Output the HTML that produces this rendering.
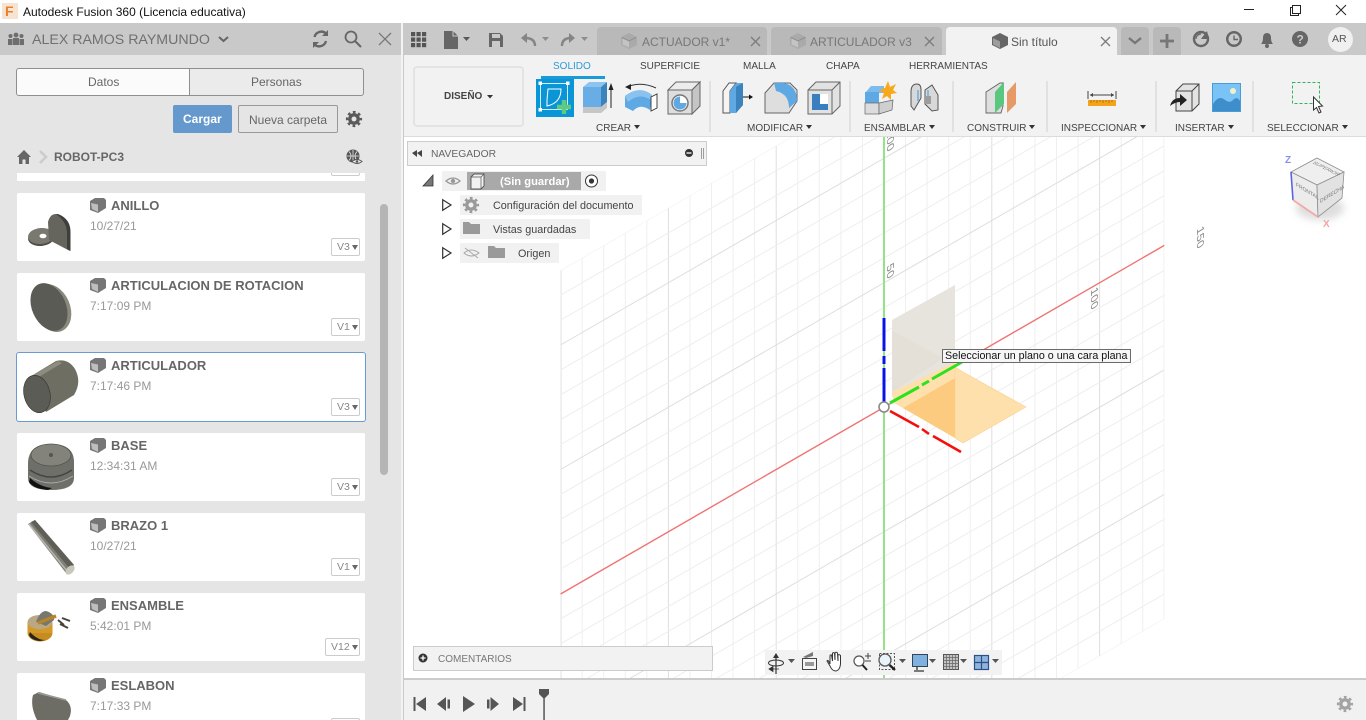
<!DOCTYPE html>
<html lang="es"><head><meta charset="utf-8"><title>Autodesk Fusion 360</title>
<style>
html,body{margin:0;padding:0;width:1366px;height:720px;overflow:hidden;background:#fff;font-family:"Liberation Sans",sans-serif}
#root{position:absolute;left:0;top:0;width:1366px;height:720px;overflow:hidden}
.a{position:absolute;box-sizing:border-box}
.t{position:absolute;white-space:nowrap}
svg.f{position:absolute;left:0;top:0;width:1366px;height:720px;overflow:hidden}
.card{position:absolute;left:17px;width:348px;height:68px;background:#fff;border-radius:2px}
.ttl{position:absolute;left:94px;top:4px;font-size:13px;line-height:18px;font-weight:bold;color:#666;white-space:nowrap}
.dt{position:absolute;left:73px;top:25px;font-size:12px;line-height:16px;color:#999;white-space:nowrap}
.v{position:absolute;right:5px;top:45px;height:18px;width:29px;border:1px solid #ccc;border-radius:2px;font-size:10.5px;line-height:16px;color:#888;padding-left:5px;box-sizing:border-box;background:#fff}
.v:after{content:"";position:absolute;right:1px;top:6px;border:3.5px solid transparent;border-top:5px solid #666;border-bottom:0}
.rb{font-size:10px;line-height:12px;color:#444;top:123px}
.rb:after{content:"";display:inline-block;margin-left:3px;vertical-align:2px;border:3px solid transparent;border-top:4px solid #333;border-bottom:0}
.tb{font-size:10px;line-height:12px;top:61px}
.tab{position:absolute;top:27px;height:28px;background:#b9b9b9;border-radius:4px 4px 0 0}
</style></head><body><div id="root">

<!-- 3D grid -->
<svg class="f" viewBox="0 0 1366 720">
<defs><clipPath id="g"><polygon points="560.6,270.3 1028.7,0 1164.3,0 1164.3,618.9 989.2,720 560.6,720"/></clipPath>
<filter id="bl" x="-50%" y="-50%" width="200%" height="200%"><feGaussianBlur stdDeviation="4"/></filter></defs>
<g clip-path="url(#g)" fill="none">
<path stroke="#efefef" d="M582.2 0V720M603.7 0V720M625.3 0V720M646.8 0V720M690 0V720M711.5 0V720M733.1 0V720M754.6 0V720M797.8 0V720M819.3 0V720M840.9 0V720M862.4 0V720M905.6 0V720M927.1 0V720M948.7 0V720M970.2 0V720M1013.4 0V720M1034.9 0V720M1056.5 0V720M1078 0V720M1121.2 0V720M1142.7 0V720M1164 0V720"/>
<path stroke="#dedede" d="M561 0V720M668.4 0V720M776.2 0V720M991.8 0V720M1099.6 0V720"/>
<path stroke="#eeeeee" d="M989.2 720L1164.3 618.9M946.1 720L1164.3 594M903 720L1164.3 569.1M859.9 720L1164.3 544.2M816.7 720L1164.3 519.3M730.5 720L1164.3 469.5M687.4 720L1164.3 444.6M644.3 720L1164.3 419.7M601.1 720L1164.3 394.8M560.6 693.6l603.7-348.6M560.6 668.7l603.7-348.6M560.6 643.8l603.7-348.6M560.6 618.9l603.7-348.6M560.6 569.1l603.7-348.6M560.6 544.2l603.7-348.6M560.6 519.3l603.7-348.6M560.6 494.4l603.7-348.6M560.6 444.6l603.7-348.6M560.6 419.7l603.7-348.6M560.6 394.8l603.7-348.6M560.6 369.9l603.7-348.6M560.6 320.1L1115 0M560.6 295.2L1071.9 0M560.6 270.3L1028.7 0"/>
<path stroke="#dedede" d="M773.6 720L1164.3 494.4M560.6 718.5l603.7-348.6M560.6 469.5l603.7-348.6M560.6 345L1158.1 0"/>
</g>
<path d="M560.6 594L1164.3 245.4" stroke="#f07373" stroke-width="1.4" fill="none"/>
<path d="M884 137V678" stroke="#93e487" stroke-width="2" fill="none"/>
<g font-family="Liberation Sans" font-size="12.500" fill="#8a8a8a">
<text transform="matrix(0 1 -.8 .5 887 266)">50</text>
<text transform="matrix(0 1 -.8 .5 887 132)">100</text>
<text transform="matrix(0 1 -.8 .5 1091 290)">100</text>
<text transform="matrix(0 1 -.8 .5 1197 229)">150</text>
</g>
<!-- planes -->
<polygon points="892,320 955,285 955,362 892,397" fill="#e7e3dd"/>
<polygon points="892,331 943,358 892,392" fill="#e4dfd7"/>
<polygon points="892,392 955,362 955,438 894,403" fill="#fee0ad"/>
<polygon points="963,372 1026,407 963,443 955,438 955,367" fill="#fee0ad" stroke="#fdd08a" stroke-width=".6"/>
<polygon points="903,408 955,378 955,438" fill="#fdcb80"/>
<path d="M884 318V351M884 356V364M884 368V402" stroke="#0a14e6" stroke-width="3" fill="none"/>
<path d="M890 403L919 387M922 385L929 381M932 379L962 362" stroke="#2be21c" stroke-width="3" fill="none"/>
<path d="M890 411L919 427M922 429L929 434M933 436L961 452" stroke="#f50e0e" stroke-width="2.6" fill="none"/>
<circle cx="884" cy="407" r="5" fill="#fff" stroke="#8a8a8a" stroke-width="1.6"/>
<!-- viewcube -->
<ellipse cx="1320" cy="208" rx="24" ry="12" fill="#bbb" opacity=".5" filter="url(#bl)"/>
<polygon points="1317,158 1344,172 1317,185 1291,172" fill="#efefef" stroke="#8f8f8f" stroke-width=".8"/>
<polygon points="1291,172 1317,185 1318,217 1293,200" fill="#ececec" stroke="#8f8f8f" stroke-width=".8"/>
<polygon points="1317,185 1344,172 1342,198 1318,217" fill="#e2e2e2" stroke="#8f8f8f" stroke-width=".8"/>
<path d="M1291 172L1293 200" stroke="#5b63e0" stroke-width="1.600"/>
<path d="M1293 200L1318 217" stroke="#f4a8a8" stroke-width="1.800"/>
<g font-family="Liberation Sans" font-size="10" font-weight="bold"><text x="1285" y="163" fill="#8b8ff0">Z</text><text x="1323" y="227" fill="#f4a4a4">X</text></g>
<g font-family="Liberation Sans" font-size="5.500" fill="#777"><text transform="matrix(.9 .55 0 1 1296 186)">FRONTAL</text><text transform="matrix(.9 -.55 0 1 1320 203)">DERECHA</text><text transform="matrix(.9 .45 -.9 .45 1312 163)">SUPERIOR</text></g>
</svg>

<!-- title bar -->
<div class="a" style="left:0;top:0;width:1366px;height:23px;background:#fff"></div>
<div class="a" style="left:2px;top:3px;width:16px;height:16px;background:#f6e3d2"></div>
<div class="t" style="left:5px;top:3px;font-size:14px;line-height:16px;font-weight:bold;color:#e8822e">F</div>
<div class="t" style="left:23px;top:4px;font-size:12px;line-height:16px;color:#111">Autodesk Fusion 360 (Licencia educativa)</div>
<div class="a" style="left:1244px;top:9px;width:10px;height:1px;background:#222"></div>
<div class="a" style="left:1292px;top:5px;width:9px;height:9px;border:1px solid #222;background:#fff;box-shadow:-2px 2px 0 -1px #fff,-2px 2px 0 0 #222"></div>
<svg class="f" viewBox="0 0 1366 720" style="z-index:1"><path d="M1336 5l10 10M1346 5l-10 10" stroke="#222" fill="none"/></svg>

<!-- left panel -->
<div class="a" style="left:0;top:23px;width:401px;height:697px;background:#e5e5e5"></div>
<div class="a" style="left:401px;top:23px;width:2px;height:697px;background:#f3f3f3"></div>
<div class="a" style="left:403px;top:23px;width:1px;height:697px;background:#c9c9c9"></div>
<div class="a" style="left:0;top:23px;width:401px;height:32px;background:#c9c9c9"></div>
<div class="t" style="left:32px;top:32px;font-size:14.200px;line-height:16px;color:#707070">ALEX RAMOS RAYMUNDO</div>
<div class="a" style="left:16px;top:68px;width:174px;height:28px;background:#fbfbfb;border:1px solid #8f8f8f;border-radius:3px 0 0 3px"></div>
<div class="a" style="left:189px;top:68px;width:175px;height:28px;background:#ebebeb;border:1px solid #8f8f8f;border-radius:0 3px 3px 0"></div>
<div class="t" style="left:88px;top:74px;font-size:12px;line-height:16px;color:#666">Datos</div>
<div class="t" style="left:251px;top:74px;font-size:12px;line-height:16px;color:#666">Personas</div>
<div class="a" style="left:173px;top:105px;width:59px;height:28px;background:#6598cc;border-radius:2px"></div>
<div class="t" style="left:183px;top:111px;font-size:12px;line-height:16px;font-weight:bold;color:#fff">Cargar</div>
<div class="a" style="left:238px;top:105px;width:100px;height:28px;border:1px solid #999;border-radius:2px"></div>
<div class="t" style="left:249px;top:112px;font-size:12px;line-height:16px;color:#666">Nueva carpeta</div>
<div class="t" style="left:54px;top:149px;font-size:12px;line-height:16px;font-weight:bold;color:#666">ROBOT-PC3</div>

<!-- cards -->
<div class="a" style="left:17px;top:173px;width:348px;height:8px;background:#fff"></div>
<div class="a" style="left:331px;top:173px;width:29px;height:3px;border:1px solid #ccc;border-top:0;border-radius:0 0 2px 2px"></div>
<div class="card" style="top:193px"><div class="ttl">ANILLO</div><div class="dt">10/27/21</div><div class="v">V3</div></div>
<div class="card" style="top:273px"><div class="ttl">ARTICULACION DE ROTACION</div><div class="dt">7:17:09 PM</div><div class="v">V1</div></div>
<div class="card" style="top:353px;box-shadow:0 0 0 1px #6a9bd2"><div class="ttl">ARTICULADOR</div><div class="dt">7:17:46 PM</div><div class="v">V3</div></div>
<div class="card" style="top:433px"><div class="ttl">BASE</div><div class="dt">12:34:31 AM</div><div class="v">V3</div></div>
<div class="card" style="top:513px"><div class="ttl">BRAZO 1</div><div class="dt">10/27/21</div><div class="v">V1</div></div>
<div class="card" style="top:593px"><div class="ttl">ENSAMBLE</div><div class="dt">5:42:01 PM</div><div class="v" style="width:35px">V12</div></div>
<div class="card" style="top:673px;height:47px;border-radius:2px 2px 0 0"><div class="ttl">ESLABON</div><div class="dt">7:17:33 PM</div><div class="a" style="right:5px;top:45px;width:29px;height:2px;border:1px solid #ccc;border-bottom:0;border-radius:2px 2px 0 0"></div></div>
<div class="a" style="left:380px;top:204px;width:8px;height:271px;background:#b5b5b5;border-radius:4px"></div>

<!-- top tool row -->
<div class="a" style="left:404px;top:23px;width:962px;height:32px;background:#c9c9c9"></div>
<div class="tab" style="left:597px;width:170px"></div>
<div class="tab" style="left:771px;width:171px"></div>
<div class="tab" style="left:946px;width:171px;background:#f2f2f2"></div>
<div class="tab" style="left:1121px;width:28px"></div>
<div class="tab" style="left:1153px;width:28px"></div>
<div class="t" style="left:642px;top:34px;font-size:12px;line-height:16px;color:#777">ACTUADOR v1*</div>
<div class="t" style="left:810px;top:34px;font-size:12px;line-height:16px;color:#777">ARTICULADOR v3</div>
<div class="t" style="left:1011px;top:34px;font-size:12px;line-height:16px;color:#555">Sin título</div>
<div class="a" style="left:1328px;top:27px;width:25px;height:25px;border-radius:50%;background:#f0f0f0"></div>
<div class="t" style="left:1332px;top:31px;font-size:10.500px;line-height:16px;color:#555">AR</div>

<!-- ribbon -->
<div class="a" style="left:404px;top:55px;width:962px;height:82px;background:#f2f2f2;border-bottom:1px solid #dcdcdc"></div>
<div class="a" style="left:413px;top:66px;width:111px;height:61px;border:2px solid #e3e3e3;border-radius:4px"></div>
<div class="t" style="left:444px;top:90px;font-size:10px;line-height:14px;font-weight:bold;color:#444">DISEÑO</div>
<div class="t tb" style="left:553px;color:#2c9ad8">SOLIDO</div>
<div class="t tb" style="left:640px;color:#444">SUPERFICIE</div>
<div class="t tb" style="left:743px;color:#444">MALLA</div>
<div class="t tb" style="left:826px;color:#444">CHAPA</div>
<div class="t tb" style="left:909px;color:#444">HERRAMIENTAS</div>
<div class="a" style="left:541px;top:76px;width:64px;height:3px;background:#1b9ad9"></div>
<div class="t rb" style="left:596px">CREAR</div>
<div class="t rb" style="left:747px">MODIFICAR</div>
<div class="t rb" style="left:864px">ENSAMBLAR</div>
<div class="t rb" style="left:967px">CONSTRUIR</div>
<div class="t rb" style="left:1061px">INSPECCIONAR</div>
<div class="t rb" style="left:1175px">INSERTAR</div>
<div class="t rb" style="left:1267px">SELECCIONAR</div>

<!-- navigator -->
<div class="a" style="left:407px;top:141px;width:300px;height:25px;background:#f2f2f2;border:1px solid #ccc"></div>
<div class="t" style="left:431px;top:148px;font-size:10.300px;line-height:14px;color:#666">NAVEGADOR</div>
<div class="a" style="left:442px;top:171px;width:164px;height:20px;background:#f1f1f1"></div>
<div class="a" style="left:467px;top:172px;width:114px;height:18px;background:#a9a9a9"></div>
<div class="t" style="left:500px;top:176px;font-size:11.200px;line-height:13px;font-weight:bold;color:#fff">(Sin guardar)</div>
<div class="a" style="left:460px;top:195px;width:182px;height:20px;background:#f1f1f1"></div>
<div class="a" style="left:460px;top:219px;width:130px;height:20px;background:#f1f1f1"></div>
<div class="a" style="left:460px;top:243px;width:99px;height:20px;background:#f1f1f1"></div>
<div class="t" style="left:493px;top:200px;font-size:10.800px;line-height:13px;color:#444">Configuración del documento</div>
<div class="t" style="left:493px;top:224px;font-size:10.800px;line-height:13px;color:#444">Vistas guardadas</div>
<div class="t" style="left:518px;top:248px;font-size:10.800px;line-height:13px;color:#444">Origen</div>

<!-- comments / bottom -->
<div class="a" style="left:413px;top:646px;width:300px;height:25px;background:#f2f2f2;border:1px solid #ccc"></div>
<div class="t" style="left:438px;top:653px;font-size:10px;line-height:14px;color:#777">COMENTARIOS</div>
<div class="a" style="left:765px;top:650px;width:237px;height:25px;background:#f2f2f2"></div>
<div class="a" style="left:404px;top:678px;width:962px;height:42px;background:#f1f1f1;border-top:2px solid #cbcbcb"></div>

<!-- icons -->
<svg class="f" viewBox="0 0 1366 720" style="z-index:2">
<defs>
<g id="cube"><path d="M0 3L5 0H14L16 2V10L8 15L0 12Z" fill="#767676"/><path d="M1 5L8 6.500V14L2 11Z" fill="#bdbdbd"/></g>
<g id="cubeL"><path d="M0 4L8 0L16 4V12L8 16L0 12Z" fill="#aaa"/><path d="M1.500 5L8 8V14.500L1.500 11.500Z" fill="#c4c4c4"/><path d="M1 4.500L8 8L15 4.500" stroke="#8f8f8f" fill="none"/></g>
<g id="tri"><path d="M0 0H7L3.500 4Z" fill="#444"/></g>
<g id="gear"><circle r="4.200" fill="none" stroke="currentColor" stroke-width="3.400"/><circle r="6.900" fill="none" stroke="currentColor" stroke-width="2.400" stroke-dasharray="2.710 2.710" stroke-dashoffset="1.350"/></g>
<g id="exp"><path d="M0.700 0.700L9 6L0.700 11.300Z" fill="#fff" stroke="#333" stroke-width="1.200"/></g>
<path id="fold" d="M0 0H6L8 2H17V12H0Z" fill="#9a9a9a"/>
</defs>

<!-- left header icons -->
<g fill="#6e6e6e"><circle cx="16" cy="35" r="2.400"/><circle cx="10.500" cy="36" r="2"/><circle cx="21.500" cy="36" r="2"/><rect x="13" y="38" width="6" height="7"/><rect x="8" y="39" width="4.500" height="6"/><rect x="19.500" y="39" width="4.500" height="6"/></g>
<path d="M219 37l4.500 4 4.500-4" stroke="#666" stroke-width="2" fill="none"/>
<path d="M314.500 37a7 7 0 0 1 12-3M326 41a7 7 0 0 1-12 3" stroke="#666" stroke-width="2.400" fill="none"/><path d="M328 30v6h-6zM313 48v-6h6z" fill="#666"/>
<circle cx="351" cy="37" r="5.500" stroke="#666" stroke-width="1.800" fill="none"/><path d="M355 41l6 6" stroke="#666" stroke-width="2"/>
<path d="M379 33l12 12M391 33l-12 12" stroke="#777" stroke-width="1.300"/>
<use href="#gear" color="#5a5a5a" transform="translate(354 119)"/>
<path d="M24 150L17 157H19V164H22.500V159.500H25.500V164H29V157H31Z" fill="#666"/>
<path d="M40 151L46 157L40 163" stroke="#ccc" stroke-width="2.600" fill="none"/>
<circle cx="353" cy="156" r="6.500" fill="#555"/><path d="M347 156H359M353 150V162M349 151.500Q353 156 349 160.500M357 151.500Q353 156 357 160.500" stroke="#e5e5e5" stroke-width=".8" fill="none"/>
<path d="M352 161.500Q357 157.500 362 161.500Q357 165.500 352 161.500Z" fill="#eee" stroke="#555"/><circle cx="357" cy="161.500" r="1.300" fill="#555"/>

<!-- title cubes -->
<use href="#cube" x="90" y="198"/><use href="#cube" x="90" y="278"/><use href="#cube" x="90" y="358"/><use href="#cube" x="90" y="438"/><use href="#cube" x="90" y="518"/><use href="#cube" x="90" y="598"/><use href="#cube" x="90" y="678"/>

<!-- thumbnails -->
<g>
<ellipse cx="41" cy="238" rx="13" ry="8" fill="#4f4e48" transform="rotate(-5 41 238)"/><ellipse cx="41" cy="236" rx="13" ry="8" fill="#7a7970" transform="rotate(-5 41 236)"/><ellipse cx="43" cy="236" rx="3.500" ry="2.300" fill="#fff"/>
<path d="M48 222Q50 214 56 214Q70 218 70 233V251L49 240Z" fill="#66655d"/><path d="M58 214Q71 219 70.500 233V251L67 249V233Q67 222 56 214Z" fill="#3f3f3a"/>

<ellipse cx="52" cy="308" rx="18" ry="25" fill="#8a8a7c" transform="rotate(-24 52 308)"/><ellipse cx="49" cy="307" rx="17" ry="25" fill="#5b5b55" transform="rotate(-24 49 307)"/>

<path d="M28 378L56 361Q68 358 75 369Q82 382 74 395L46 412Q40 398 28 378Z" fill="#6f6e63"/><path d="M30 377L58 361L62 363L34 380Z" fill="#9a9a8c" opacity=".7"/><ellipse cx="37" cy="394" rx="13" ry="19" fill="#5c5c56" stroke="#33332f" stroke-width=".6" transform="rotate(-14 37 394)"/>

<path d="M28 462Q29 444 51 444Q74 444 74 462V478Q74 490 51 490Q28 490 28 478Z" fill="#6f6f69"/><ellipse cx="51" cy="455" rx="20" ry="11" fill="#83837c" stroke="#55554f" stroke-width=".8"/><circle cx="51" cy="455" r="2" fill="#555"/><path d="M30 470Q51 484 72 470" stroke="#444" stroke-width="1.500" fill="none"/><path d="M29 476Q51 490 73 476" stroke="#aaa" fill="none"/><path d="M30 478Q40 487 52 488L48 490Q34 489 29 482Z" fill="#111"/>

<path d="M28 524L35 520L74 565L66 573Z" fill="#807f77"/><path d="M31 522L35 520L74 565L70 569Z" fill="#5f5e57"/><path d="M29 524L67 571" stroke="#b7b7ae" stroke-width="1.500"/><ellipse cx="70" cy="570" rx="5.500" ry="3.500" fill="#c7c7bd" transform="rotate(-45 70 570)"/>

<ellipse cx="40" cy="633" rx="12.500" ry="8.500" fill="#c78b1f"/><rect x="27.500" y="622" width="25" height="11" fill="#d39a2b"/><ellipse cx="40" cy="622" rx="12.500" ry="7" fill="#b9a883"/><path d="M30 632Q37 640 45 640L40 641Q31 640 29 635Z" fill="#222"/><path d="M36 622Q40 611 46 611Q54 613 54 620L46 626Z" fill="#77776f"/><path d="M38 623L56 616" stroke="#b5842c" stroke-width="3.500"/><path d="M58 620L64 625M62 618L70 621M60 624L68 628" stroke="#4a4338" stroke-width="2"/>

<path d="M33 695L39 692L66 700Q73 706 70 716L68 720H37Q30 706 33 695Z" fill="#6d6d66"/><path d="M38 693L66 700" stroke="#9b9b90" stroke-width="1.500"/>
</g>

<!-- tool row -->
<g fill="#555"><rect x="411" y="32" width="4.200" height="4.200"/><rect x="416.500" y="32" width="4.200" height="4.200"/><rect x="422" y="32" width="4.200" height="4.200"/><rect x="411" y="37.500" width="4.200" height="4.200"/><rect x="416.500" y="37.500" width="4.200" height="4.200"/><rect x="422" y="37.500" width="4.200" height="4.200"/><rect x="411" y="43" width="4.200" height="4.200"/><rect x="416.500" y="43" width="4.200" height="4.200"/><rect x="422" y="43" width="4.200" height="4.200"/></g>
<path d="M444 31H453L458 36V49H444Z" fill="#666"/><path d="M453 31V36H458" stroke="#c9c9c9" fill="none"/><use href="#tri" x="463" y="37" opacity=".85"/>
<path d="M489 33H500L503 36V47H489Z" fill="#666"/><rect x="492" y="34" width="8" height="4" fill="#c9c9c9"/><rect x="492" y="41" width="8" height="6" fill="#c9c9c9"/>
<path d="M535 46Q535 38 525 38" stroke="#858585" stroke-width="2.400" fill="none"/><path d="M527 33L521 38L527 43Z" fill="#858585"/><use href="#tri" x="542" y="37" opacity=".45"/>
<path d="M562 46Q562 38 571 38" stroke="#858585" stroke-width="2.400" fill="none"/><path d="M569 33L575 38L569 43Z" fill="#858585"/><use href="#tri" x="581" y="37" opacity=".45"/>
<use href="#cubeL" x="621" y="33"/><use href="#cubeL" x="790" y="33"/>
<path d="M992 37L1000 33L1008 37V45L1000 49L992 45Z" fill="#666"/><path d="M993 38L1000 41.500V48L993 44.500Z" fill="#9d9d9d"/>
<path d="M751 37l9 9M760 37l-9 9M925 37l9 9M934 37l-9 9M1101 37l9 9M1110 37l-9 9" stroke="#7c7c7c" stroke-width="1.300"/>
<path d="M1129 38l6 5 6-5" stroke="#777" stroke-width="2.400" fill="none"/><path d="M1160 41H1174M1167 34V48" stroke="#777" stroke-width="2.800"/>
<circle cx="1201" cy="39" r="7" fill="none" stroke="#666" stroke-width="2.400"/><path d="M1201 39L1207 31L1209 39Z" fill="#666"/><path d="M1196 39a5 5 0 0 1 5-5" stroke="#666" stroke-width="1.200" fill="none"/>
<circle cx="1234" cy="39" r="8" fill="#666"/><circle cx="1234" cy="39" r="5.500" fill="#c9c9c9"/><path d="M1234 35.500V39.500H1238" stroke="#666" stroke-width="1.400" fill="none"/>
<path d="M1261 44Q1263 42 1263 38Q1263 33 1267 33Q1271 33 1271 38Q1271 42 1273 44Z" fill="#666"/><circle cx="1267" cy="46" r="2" fill="#666"/>
<circle cx="1300" cy="39" r="8" fill="#666"/>
<text x="1296.500" y="43.500" font-family="Liberation Sans" font-size="12" font-weight="bold" fill="#c9c9c9">?</text>

<!-- ribbon separators -->
<path d="M710 81V132M850 81V132M953 81V132M1047 81V132M1156 81V132M1253 81V132" stroke="#dadada" stroke-width="1.400"/>
<path d="M487 95h6l-3 3.500z" fill="#333"/>

<!-- sketch -->
<rect x="536" y="79" width="38" height="38" fill="#0a96d6"/>
<rect x="540.500" y="83.500" width="27" height="26" fill="none" stroke="#d6effa" stroke-width="1"/>
<path d="M547 100L548 89H561Q561 103 547 106Z" stroke="#fff" fill="none"/>
<g fill="#fff"><rect x="538.500" y="81.500" width="3.500" height="3.500"/><rect x="566" y="81.500" width="3.500" height="3.500"/><rect x="538.500" y="108" width="3.500" height="3.500"/></g>
<path d="M564 100V114M557 107H571" stroke="#5fcb80" stroke-width="4.400"/>
<!-- extrude -->
<polygon points="583,87 601,87 601,107 583,107" fill="#69ade6"/><polygon points="583,87 589,82 607,82 601,87" fill="#8cc4ef"/><polygon points="601,87 607,82 607,102 601,107" fill="#3c82bd"/><polygon points="583,110 583,113 601,113 607,108 607,102 601,107 583,107" fill="#c6c6c6"/>
<path d="M611 87V108" stroke="#222"/><path d="M608.500 90L611 83L613.500 90Z" fill="#222"/>
<!-- revolve -->
<path d="M627 87Q641 81 656 88" stroke="#333" fill="none"/><path d="M625 87L631 84L631 90Z" fill="#222"/>
<path d="M625 96Q640 85 652 95L650 110Q640 103 633 111L625 107Z" fill="#5ea8e4"/><path d="M625 96Q640 85 652 95L651 100Q640 92 628 102Z" fill="#8ac2ef"/>
<polygon points="651,97 657,94 657,108 651,111" fill="#fff" stroke="#333" stroke-width=".9"/>
<!-- hole -->
<polygon points="668,90 692,90 700,82 676,82" fill="#ececec" stroke="#666"/><polygon points="692,90 700,82 700,106 692,114" fill="#c5c5c5" stroke="#666"/><rect x="668" y="90" width="24" height="24" fill="#dedede" stroke="#666"/><circle cx="680" cy="103" r="8" fill="#fff" stroke="#777" stroke-width="1.500"/><path d="M680 103L680 96.500A6.500 6.500 0 1 0 686.500 103Z" fill="#5ea8e4"/>
<!-- press pull -->
<polygon points="723,113 723,91 729,83 736,83 730,91 730,113" fill="#f4f4f4" stroke="#555"/><polygon points="730,91 736,83 743,83 743,105 736,113 730,113" fill="#5ea8e4"/><polygon points="736,87 743,83 743,105 736,113" fill="#3c82bd"/>
<path d="M743 97H750" stroke="#111"/><path d="M749 94.500L753 97L749 99.500Z" fill="#111"/>
<!-- fillet -->
<polygon points="765,93 774,83 790,83 797,90 797,101 789,113 765,113" fill="#dedede" stroke="#666"/><path d="M774 83H784Q797 86 797 101L789 108Q789 94 776 91Z" fill="#5ea8e4"/>
<!-- shell -->
<polygon points="808,90 816,82 840,82 840,106 832,114 808,114" fill="#e2e2e2" stroke="#666"/><path d="M808 90H832V114M832 90L840 82" stroke="#666" fill="none"/><rect x="812" y="94" width="16" height="16" fill="#8ecaf5"/><polygon points="812,94 820,94 820,104 828,104 828,110 812,110" fill="#2f77b9" opacity=".9"/><rect x="820" y="94" width="8" height="10" fill="#fff"/>
<!-- assemble -->
<polygon points="865,93 871,86 884,86 884,93" fill="#7cbbed"/><rect x="865" y="92" width="14" height="11" fill="#5ea8e4"/><rect x="865" y="103" width="14" height="11" fill="#dcdcdc" stroke="#666" stroke-width=".7"/><polygon points="879,103 893,100 892,110 879,114" fill="#cfcfcf" stroke="#666" stroke-width=".7"/>
<path d="M888 81L890 87L896 84L893 90L897 93L891 94L891 100L887 96L882 99L884 93L879 90L885 88Z" fill="#f7a81b"/>
<!-- joint -->
<path d="M911 92Q911 84 917 84Q921 84 921 90V98L914 110L911 106Z" fill="#d8d8d8" stroke="#555"/><path d="M925 90L932 85L938 95V110L932 111L925 104Z" fill="#d8d8d8" stroke="#555"/><path d="M918 90V101M928 90V100" stroke="#2e9ae0"/><rect x="925" y="96" width="6" height="8" fill="#9d9d9d"/>
<!-- construct -->
<polygon points="986,92 1000,83 1003,83 1003,106 1001,113 986,113" fill="#dedede" stroke="#666" stroke-width=".9"/><polygon points="995,92 1004,82 1004,104 995,113" fill="#5ac77f"/>
<polygon points="1007,92 1016,82 1016,104 1007,113" fill="#e69a68"/>
<!-- ruler -->
<path d="M1088 91V99M1116 91V99" stroke="#444"/><path d="M1090 95H1114" stroke="#444"/><path d="M1090 95l3-2v4zM1114 95l-3-2v4z" fill="#444"/>
<rect x="1088" y="100" width="28" height="6" fill="#f5a31a"/><path d="M1091 100v3M1094 100v2M1097 100v3M1100 100v2M1103 100v3M1106 100v2M1109 100v3M1112 100v2" stroke="#9a6208" stroke-width=".7"/>
<!-- insert -->
<polygon points="1176,91 1183,84 1199,84 1199,104 1192,111 1176,111" fill="#e3e3e3" stroke="#444"/><path d="M1176 91H1192V111M1192 91L1199 84" stroke="#444" fill="none"/><path d="M1170 106Q1172 98 1180 98V94L1187 100L1180 106V102Q1175 102 1170 106Z" fill="#222"/>
<!-- image -->
<rect x="1212" y="83" width="29" height="29" fill="#79c3f6"/><path d="M1212 106Q1218 94 1225 100Q1230 104 1234 99Q1239 96 1241 104V112H1212Z" fill="#3e8ecb"/><circle cx="1233" cy="91" r="3" fill="#f4f0c8"/><rect x="1212.500" y="83.500" width="28" height="28" fill="none" stroke="#4a9bd6"/>
<!-- select -->
<rect x="1292.500" y="82.500" width="27" height="21" fill="none" stroke="#2fb45c" stroke-dasharray="3 2"/>
<path d="M1313.500 97L1313.500 110L1316.500 107.500L1319 113L1321 112L1318.500 106.500L1322.500 106Z" fill="#fff" stroke="#333"/>

<!-- navigator icons -->
<path d="M413 152L418 149V156ZM418 152L423 149V156Z" transform="translate(-1 1)" fill="#444"/>
<circle cx="689" cy="153" r="4" fill="#333"/><path d="M686.500 153H691.500" stroke="#fff" stroke-width="1.300"/>
<path d="M701.500 148V159M703.500 148V159" stroke="#888" stroke-width=".8"/>
<path d="M423 186L433 175V186Z" fill="#777" stroke="#333" stroke-width=".8"/>
<path d="M446 181Q453 175 460 181Q453 187 446 181Z" fill="none" stroke="#999" stroke-width="1.300"/><circle cx="453" cy="181" r="2.200" fill="#999"/>
<path d="M471 177L474 174H484V186L481 189H471Z" fill="#f1f1f1" stroke="#555" stroke-width=".9"/><path d="M471 177H481V189M481 177L484 174" stroke="#555" stroke-width=".7" fill="none"/>
<circle cx="591.500" cy="181" r="6" fill="#fff" stroke="#333"/><circle cx="591.500" cy="181" r="2.600" fill="#333"/>
<use href="#exp" x="442" y="199"/><use href="#exp" x="442" y="223"/><use href="#exp" x="442" y="247"/>
<use href="#gear" color="#9a9a9a" transform="translate(471 205)"/>
<use href="#fold" x="463" y="222"/><use href="#fold" x="488" y="246"/>
<path d="M464 253Q471 247 479 253Q471 259 464 253ZM465 248L478 258" fill="none" stroke="#aaa"/>

<!-- comments -->
<circle cx="423" cy="658" r="4.500" fill="#333"/><path d="M423 655.500V660.500M420.500 658H425.500" stroke="#fff" stroke-width="1.300"/>

<!-- nav toolbar -->
<path d="M776 654V674" stroke="#333" stroke-width="1.200"/><path d="M773 658L776 653L779 658Z" fill="#333"/><ellipse cx="776" cy="663" rx="7.500" ry="3" fill="none" stroke="#333"/><path d="M770 669H779M773 666.500L769 669L773 671.500Z" stroke="#333" fill="#333" stroke-width=".8"/>
<use href="#tri" x="788" y="659" opacity=".9"/>
<rect x="802.500" y="658.500" width="14" height="11" fill="#f6f6f6" stroke="#444"/><rect x="805" y="662" width="9" height="4" fill="#999"/><path d="M803 657L813 652V656L806 658" fill="#777"/>
<path d="M830 664V656Q830 654.500 831.500 655L832.500 661V653.500Q833 652 834.500 653L835 660V653Q836 651.500 837.500 653L838 661V655Q839 654 840.500 655.500V664Q840 670 836 671Q832 671 830 666L827 661Q828 659 830 664Z" fill="#fff" stroke="#333"/>
<circle cx="859" cy="661" r="5" fill="#fff" stroke="#555" stroke-width="1.200"/><path d="M862.500 665L867 670" stroke="#222" stroke-width="2"/><path d="M865 656H871M868 653V659M865 661H871" stroke="#444"/>
<rect x="879.500" y="653.500" width="15" height="16" fill="none" stroke="#555" stroke-dasharray="2 1.500"/><circle cx="885" cy="660" r="6" fill="#e9f3fa" stroke="#555" stroke-width="1.300"/><path d="M889.500 665L895 670" stroke="#222" stroke-width="2.400"/>
<use href="#tri" x="899" y="659" opacity=".9"/>
<rect x="912.500" y="654.500" width="15" height="12" fill="#7fb2e0" stroke="#345" stroke-width="1"/><path d="M917 667V670M914 671H924" stroke="#333" stroke-width="1.300"/>
<use href="#tri" x="929" y="659" opacity=".9"/>
<rect x="943.500" y="654.500" width="15" height="15" fill="#c4c4c4" stroke="#555"/><path d="M946.500 654V670M949.500 654V670M952.500 654V670M955.500 654V670M943 657.500H959M943 660.500H959M943 663.500H959M943 666.500H959" stroke="#666" stroke-width=".7"/>
<use href="#tri" x="960" y="659" opacity=".9"/>
<rect x="974.500" y="655.500" width="14" height="14" fill="#8fb3dc" stroke="#2c4f85" stroke-width="1.200"/><path d="M981.500 655V670M974 662.500H989" stroke="#2c4f85" stroke-width="1.200"/>
<use href="#tri" x="992" y="659" opacity=".9"/>

<!-- timeline -->
<g fill="#555"><path d="M413.500 697H415.500V711H413.500ZM416 704L426 697V711Z"/><path d="M437 704L446 697V711ZM447.500 699.500H450V708.500H447.500Z"/><path d="M463 696L475 704L463 712Z"/><path d="M487 699.500H489.500V708.500H487ZM490.500 697L499 704L490.500 711Z"/><path d="M513 697L523 704L513 711ZM523.500 697H525.500V711H523.500Z"/><path d="M539 689H549V694L545 698H543L539 694Z"/><rect x="543.300" y="696" width="1.500" height="24"/></g>
<use href="#gear" color="#a3a3a3" transform="translate(1345 704)"/>
</svg>

<!-- tooltip -->
<div class="a" style="z-index:3;left:942px;top:349px;width:189px;height:14px;background:#f6f6f6;border:1px solid #6a6a6a"></div>
<div class="t" style="z-index:4;left:945px;top:349px;font-size:10.700px;line-height:14px;color:#111">Seleccionar un plano o una cara plana</div>
</div></body></html>
